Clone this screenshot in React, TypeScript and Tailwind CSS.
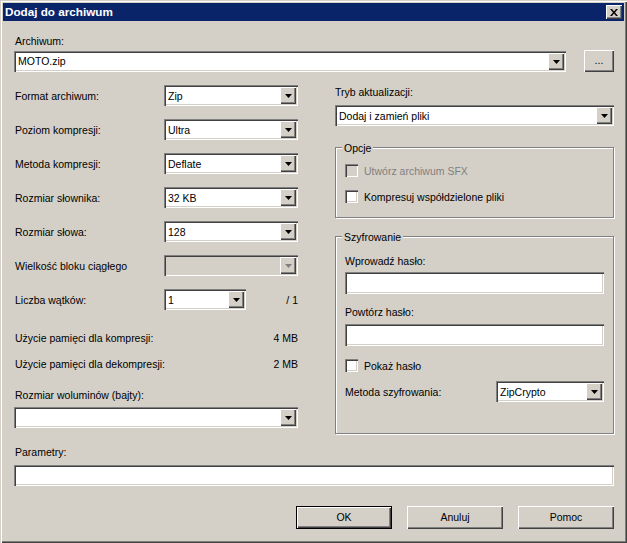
import React from 'react';

const sunken = 'bg-white shadow-[inset_1px_1px_0_#808080,inset_2px_2px_0_#404040,inset_-1px_-1px_0_#ffffff,inset_-2px_-2px_0_#d4d0c8]';
const raised = 'bg-[#d4d0c8] shadow-[inset_1px_1px_0_#ffffff,inset_-1px_-1px_0_#404040,inset_-2px_-2px_0_#808080]';
const label = 'h-[14px] leading-[14px] whitespace-nowrap';

const Arrow: React.FC<{ disabled?: boolean }> = ({ disabled }) => (
  <svg width="7" height="4" viewBox="0 0 7 4" className="block">
    <polygon points="0,0 7,0 3.5,4" fill={disabled ? '#808080' : '#000000'} />
  </svg>
);

const Combo: React.FC<{ value?: string; className: string; disabled?: boolean; flush?: boolean }> = ({ value, className, disabled, flush }) => (
  <div className={`${className} shrink-0 h-[21px] flex items-center justify-between pl-[4px] pr-[2px] ${disabled ? 'bg-[#d4d0c8] shadow-[inset_1px_1px_0_#808080,inset_2px_2px_0_#404040,inset_-1px_-1px_0_#ffffff,inset_-2px_-2px_0_#d4d0c8]' : sunken}`}>
    <span className={`whitespace-nowrap ${flush ? '' : 'pt-[2px]'}`}>{value}</span>
    <div className={`${raised} w-[16px] h-[17px] flex items-center justify-center`}>
      <Arrow disabled={disabled} />
    </div>
  </div>
);

const Row: React.FC<{ text: string; children: React.ReactNode }> = ({ text, children }) => (
  <div className="flex items-center h-[21px] pl-px">
    <span className="w-[149px] shrink-0 whitespace-nowrap pt-[2px]">{text}</span>
    {children}
  </div>
);

const Check: React.FC<{ text: string; disabled?: boolean }> = ({ text, disabled }) => (
  <div className={`flex items-center gap-[6px] h-[13px] ${disabled ? 'text-[#808080]' : ''}`}>
    <div className={`w-[13px] h-[13px] shrink-0 ${disabled ? 'bg-[#d4d0c8]' : 'bg-white'} shadow-[inset_1px_1px_0_#808080,inset_2px_2px_0_#404040,inset_-1px_-1px_0_#ffffff,inset_-2px_-2px_0_#d4d0c8]`} />
    <span className="whitespace-nowrap pt-[2px]">{text}</span>
  </div>
);

const Group: React.FC<{ title: string; className: string; children: React.ReactNode }> = ({ title, className, children }) => (
  <div className={`relative border border-[#808080] shadow-[inset_1px_1px_0_#ffffff,1px_1px_0_#ffffff] px-[9px] ${className}`}>
    <span className="absolute left-[6px] -top-[7px] h-[14px] leading-[14px] px-[2px] bg-[#d4d0c8]">{title}</span>
    {children}
  </div>
);

const Btn: React.FC<{ text: string; isDefault?: boolean }> = ({ text, isDefault }) => (
  <button className={`w-[96px] h-[23px] flex items-center justify-center ${raised} ${isDefault ? 'outline outline-1 -outline-offset-1 outline-black shadow-[inset_2px_2px_0_#ffffff,inset_-2px_-2px_0_#404040,inset_-3px_-3px_0_#808080]' : ''}`}>
    <span className="pt-px">{text}</span>
  </button>
);

export default function App() {
  return (
    <div className="w-[627px] h-[543px] bg-[#d4d0c8] text-black text-[10.5px] font-['Liberation_Sans',sans-serif] p-[3px] shadow-[inset_1px_1px_0_#d4d0c8,inset_2px_2px_0_#ffffff,inset_-1px_-1px_0_#404040,inset_-2px_-2px_0_#808080] overflow-hidden">
      {/* title bar */}
      <div className="h-[18px] bg-[#0a246a] flex items-center justify-between pl-[2px] pr-[2px]">
        <span className="text-white font-bold text-[11.7px]">Dodaj do archiwum</span>
        <div className={`${raised} w-[16px] h-[14px] flex items-center justify-center`}>
          <svg width="8" height="7" viewBox="0 0 8 7" className="block">
            <path d="M0 0 L2 0 L4 2.5 L6 0 L8 0 L5 3.5 L8 7 L6 7 L4 4.5 L2 7 L0 7 L3 3.5 Z" fill="#000000" />
          </svg>
        </div>
      </div>

      <div className="ml-[11px] w-[600px] flex flex-col">
        <div className={`${label} mt-[13px] pl-px`}>Archiwum:</div>
        <div className="flex items-start justify-between mt-[2px]">
          <Combo value="MOTO.zip" className="w-[552px] mt-px" flush />
          <button className={`${raised} w-[30px] h-[22px] flex items-center justify-center`}>...</button>
        </div>

        <div className="grid grid-cols-[284px_279px] gap-x-[37px] mt-[13px]">
          {/* left column */}
          <div className="flex flex-col">
            <div className="flex flex-col gap-[13px]">
              <Row text="Format archiwum:"><Combo value="Zip" className="w-[134px]" /></Row>
              <Row text="Poziom kompresji:"><Combo value="Ultra" className="w-[134px]" /></Row>
              <Row text="Metoda kompresji:"><Combo value="Deflate" className="w-[134px]" /></Row>
              <Row text="Rozmiar słownika:"><Combo value="32 KB" className="w-[134px]" /></Row>
              <Row text="Rozmiar słowa:"><Combo value="128" className="w-[134px]" /></Row>
              <Row text="Wielkość bloku ciągłego"><Combo className="w-[134px]" disabled /></Row>
              <Row text="Liczba wątków:">
                <Combo value="1" className="w-[82px]" />
                <span className="ml-auto pt-[2px]">/ 1</span>
              </Row>
            </div>
            <div className={`${label} mt-[21px] pl-px flex justify-between`}>
              <span>Użycie pamięci dla kompresji:</span>
              <span>4 MB</span>
            </div>
            <div className={`${label} mt-[12px] pl-px flex justify-between`}>
              <span>Użycie pamięci dla dekompresji:</span>
              <span>2 MB</span>
            </div>
            <div className={`${label} mt-[17px] pl-px`}>Rozmiar woluminów (bajty):</div>
            <Combo className="w-[284px] mt-[5px]" />
          </div>

          {/* right column */}
          <div className="flex flex-col">
            <div className={label}>Tryb aktualizacji:</div>
            <Combo value="Dodaj i zamień pliki" className="w-[279px] mt-[6px]" />
            <Group title="Opcje" className="h-[71px] mt-[21px] pt-[16px]">
              <Check text="Utwórz archiwum SFX" disabled />
              <div className="mt-[13px]"><Check text="Kompresuj współdzielone pliki" /></div>
            </Group>
            <Group title="Szyfrowanie" className="h-[198px] mt-[18px] pt-[17px]">
              <div className={label}>Wprowadź hasło:</div>
              <div className={`${sunken} h-[22px] mt-[4px]`} />
              <div className={`${label} mt-[11px]`}>Powtórz hasło:</div>
              <div className={`${sunken} h-[22px] mt-[5px]`} />
              <div className="mt-[13px]"><Check text="Pokaż hasło" /></div>
              <div className="flex items-center justify-between mt-[9px]">
                <span className="pt-[2px]">Metoda szyfrowania:</span>
                <Combo value="ZipCrypto" className="w-[108px]" />
              </div>
            </Group>
          </div>
        </div>

        <div className={`${label} mt-[11px] pl-px`}>Parametry:</div>
        <div className={`${sunken} h-[21px] mt-[6px]`} />

        <div className="flex justify-end gap-[15px] mt-[20px]">
          <Btn text="OK" isDefault />
          <Btn text="Anuluj" />
          <Btn text="Pomoc" />
        </div>
      </div>
    </div>
  );
}
